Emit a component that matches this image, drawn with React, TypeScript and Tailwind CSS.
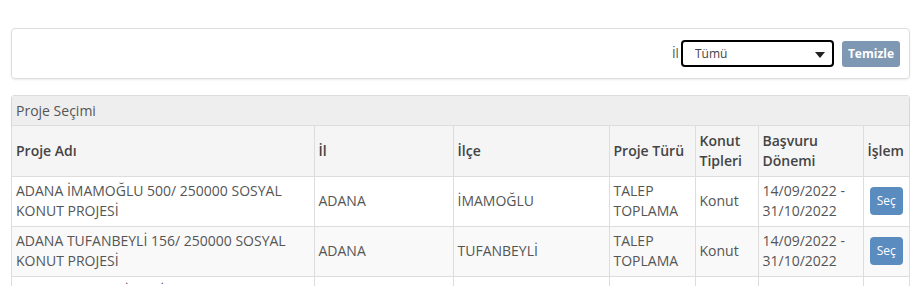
import { useState } from "react";

const rows = [
    { ad: "ADANA İMAMOĞLU 500/ 250000 SOSYAL KONUT PROJESİ", il: "ADANA", ilce: "İMAMOĞLU" },
    { ad: "ADANA TUFANBEYLİ 156/ 250000 SOSYAL KONUT PROJESİ", il: "ADANA", ilce: "TUFANBEYLİ" },
    { ad: "ADANA CEYHAN İLÇESİ 250000 SOSYAL KONUT PROJESİ", il: "ADANA", ilce: "CEYHAN" },
];

const App = () => {
    const [il, setIl] = useState("Tümü");

    return (
        <div className="bg-white min-h-screen pt-[28px] pl-[11px] pr-[7px] text-[#555] font-['Open_Sans',sans-serif] text-[14px]">
            <div className="border border-[#ddd] rounded-[4px] shadow-[0_1px_2px_rgba(0,0,0,0.08)] h-[51px] flex items-center justify-end pr-[9px]">
                <label className="text-[13px] text-[#555] mr-[2px]">İl</label>
                <div className="relative w-[153px] h-[27px] border-2 border-black rounded-[4px] flex items-center">
                    <select
                        value={il}
                        onChange={(e) => setIl(e.target.value)}
                        className="appearance-none w-full h-full bg-transparent pl-[12px] text-[12px] text-[#444] outline-none"
                    >
                        <option>Tümü</option>
                        <option>ADANA</option>
                    </select>
                    <svg className="absolute right-[7px] top-[10px] pointer-events-none" width="10" height="6" viewBox="0 0 10 6">
                        <path d="M0 0 L10 0 L5 6 Z" fill="#222" />
                    </svg>
                </div>
                <button className="ml-[8px] h-[26px] px-[6px] rounded-[3px] bg-[#7e98b4] text-white text-[12px] font-bold">Temizle</button>
            </div>

            <div className="mt-[16px] border border-[#ddd] rounded-t-[3px]">
                <div className="bg-[#eee] h-[30px] flex items-center px-[4px] text-[14px] text-[#555] border-b border-[#ddd] shadow-[0_1px_2px_rgba(0,0,0,0.08)]">
                    Proje Seçimi
                </div>
                <table className="w-full table-fixed border-collapse text-[14px] leading-[20px]">
                    <colgroup>
                        <col className="w-[302px]" />
                        <col className="w-[139px]" />
                        <col className="w-[156px]" />
                        <col className="w-[86px]" />
                        <col className="w-[63px]" />
                        <col className="w-[105px]" />
                        <col />
                    </colgroup>
                    <thead>
                        <tr className="bg-[#f5f5f5] h-[50px] text-left text-[#444]">
                            <th className="px-[4px] font-semibold">Proje Adı</th>
                            <th className="px-[4px] border-l border-[#ddd] font-semibold">İl</th>
                            <th className="px-[4px] border-l border-[#ddd] font-semibold">İlçe</th>
                            <th className="px-[4px] border-l border-[#ddd] font-semibold">Proje Türü</th>
                            <th className="px-[4px] border-l border-[#ddd] font-semibold">Konut Tipleri</th>
                            <th className="px-[4px] border-l border-[#ddd] font-semibold">Başvuru Dönemi</th>
                            <th className="px-[4px] border-l border-[#ddd] font-semibold">İşlem</th>
                        </tr>
                    </thead>
                    <tbody>
                        {rows.map((r, i) => (
                            <tr key={i} className={`h-[50px] border-t border-[#ddd] ${i % 2 === 1 ? "bg-[#f9f9f9]" : "bg-white"}`}>
                                <td className="px-[4px]">{r.ad}</td>
                                <td className="px-[4px] border-l border-[#ddd]">{r.il}</td>
                                <td className="px-[4px] border-l border-[#ddd]">{r.ilce}</td>
                                <td className="px-[4px] border-l border-[#ddd]">TALEP TOPLAMA</td>
                                <td className="px-[4px] border-l border-[#ddd]">Konut</td>
                                <td className="px-[4px] border-l border-[#ddd]">14/09/2022 - 31/10/2022</td>
                                <td className="px-[4px] border-l border-[#ddd] text-center">
                                    <button className="h-[28px] w-[33px] rounded-[4px] bg-[#5b8cbf] text-white text-[12px]">Seç</button>
                                </td>
                            </tr>
                        ))}
                    </tbody>
                </table>
            </div>
        </div>
    );
};

export default App;
